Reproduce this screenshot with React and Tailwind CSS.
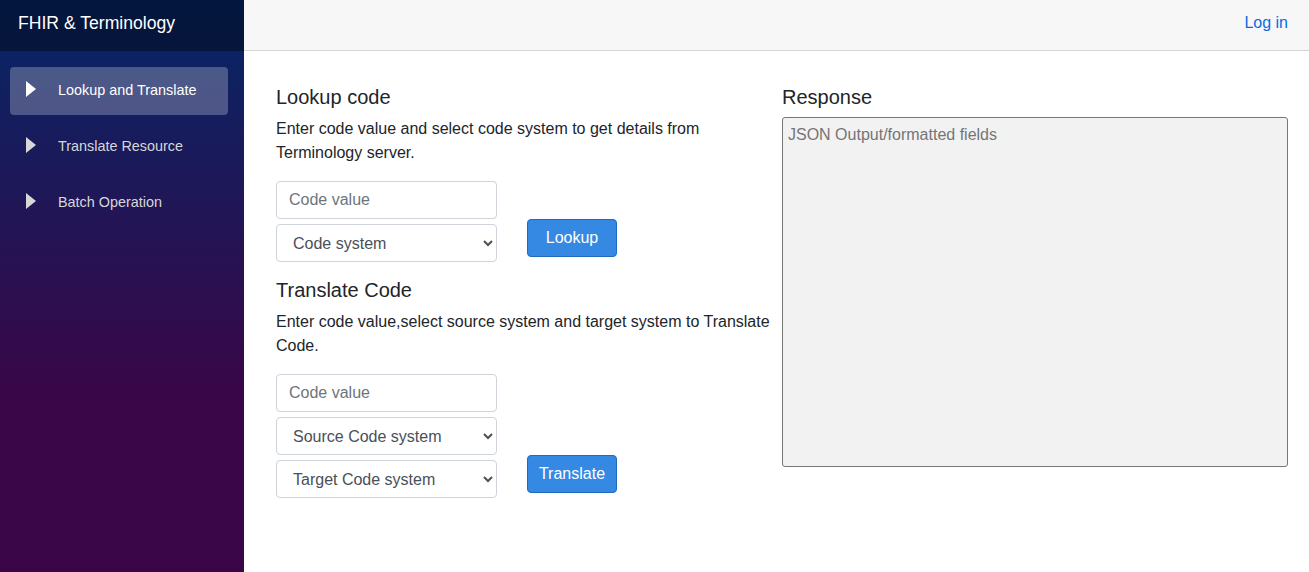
import React from "react";

const navItems = [
  { label: "Lookup and Translate", active: true },
  { label: "Translate Resource" },
  { label: "Batch Operation" },
];

function Caret({ color }) {
  return (
    <svg width="10" height="16" viewBox="0 0 10 16" className="mb-1 shrink-0">
      <polygon points="0,0 10,8 0,16" fill={color} />
    </svg>
  );
}

function Sidebar() {
  return (
    <aside className="w-[244px] shrink-0 bg-[linear-gradient(180deg,#052767_0%,#3a0647_70%)]">
      <div className="h-[51px] bg-black/40 pl-[18px] pt-[11px] text-[17.6px] leading-6 text-white">
        FHIR &amp; Terminology
      </div>
      <nav className="flex flex-col gap-2 pl-[10px] pr-4 pt-4">
        {navItems.map((item) => (
          <a
            key={item.label}
            href="#"
            className={
              item.active
                ? "flex h-12 items-center rounded pl-4 text-[14.4px] text-white bg-white/25"
                : "flex h-12 items-center rounded pl-4 text-[14.4px] text-[#d7d7d7]"
            }
          >
            <Caret color={item.active ? "#ffffff" : "#d7d7d7"} />
            <span className="ml-[22px]">{item.label}</span>
          </a>
        ))}
      </nav>
    </aside>
  );
}

const inputCls =
  "h-[38px] w-full rounded border border-[#ced4da] bg-white px-3 text-base text-[#495057] placeholder:text-[#6c757d] outline-none";
const selectCls =
  "h-[38px] w-full rounded border border-[#ced4da] bg-white px-3 text-base text-[#495057] outline-none";
const btnCls =
  "h-[38px] w-[90px] rounded border border-[#1d6cbd] bg-[#3589e3] text-base text-white";

function Lookup() {
  return (
    <section>
      <h3 className="mb-2 text-[20px] leading-6 text-[#212529]">Lookup code</h3>
      <p className="mb-4 leading-6 text-[#212529]">
        Enter code value and select code system to get details from Terminology server.
      </p>
      <div className="flex gap-[30px]">
        <div className="flex w-[221px] flex-col gap-[5px]">
          <input className={inputCls} placeholder="Code value" />
          <select className={selectCls} defaultValue="">
            <option value="">Code system</option>
          </select>
        </div>
        <div className="pt-[38px]">
          <button className={btnCls}>Lookup</button>
        </div>
      </div>
    </section>
  );
}

function Translate() {
  return (
    <section className="mt-4">
      <h3 className="mb-2 text-[20px] leading-6 text-[#212529]">Translate Code</h3>
      <p className="mb-4 leading-6 text-[#212529]">
        Enter code value,select source system and target system to Translate Code.
      </p>
      <div className="flex gap-[30px]">
        <div className="flex w-[221px] flex-col gap-[5px]">
          <input className={inputCls} placeholder="Code value" />
          <select className={selectCls} defaultValue="">
            <option value="">Source Code system</option>
          </select>
          <select className={selectCls} defaultValue="">
            <option value="">Target Code system</option>
          </select>
        </div>
        <div className="pt-[81px]">
          <button className={btnCls}>Translate</button>
        </div>
      </div>
    </section>
  );
}

export default function App() {
  return (
    <div className="flex h-[572px] bg-white font-['Liberation_Sans',Arial,sans-serif]">
      <Sidebar />
      <main className="flex min-w-0 flex-1 flex-col">
        <header className="flex h-[51px] justify-end border-b border-[#d6d5d5] bg-[#f7f7f7] pr-[21px] pt-[11px]">
          <a href="#" className="leading-6 text-[#0a6ce0]">
            Log in
          </a>
        </header>
        <div className="flex pl-8 pr-[21px] pt-[34px]">
          <div className="w-[506px] shrink-0">
            <Lookup />
            <Translate />
          </div>
          <div className="flex-1">
            <h3 className="mb-[8px] text-[20px] leading-6 text-[#212529]">Response</h3>
            <textarea
              className="block h-[350px] w-full resize-none rounded-[3px] border border-[#767676] bg-[#f2f2f2] px-[5px] pt-[5px] text-base text-[#212529] placeholder:text-[#757575] outline-none"
              placeholder="JSON Output/formatted fields"
            />
          </div>
        </div>
      </main>
    </div>
  );
}
